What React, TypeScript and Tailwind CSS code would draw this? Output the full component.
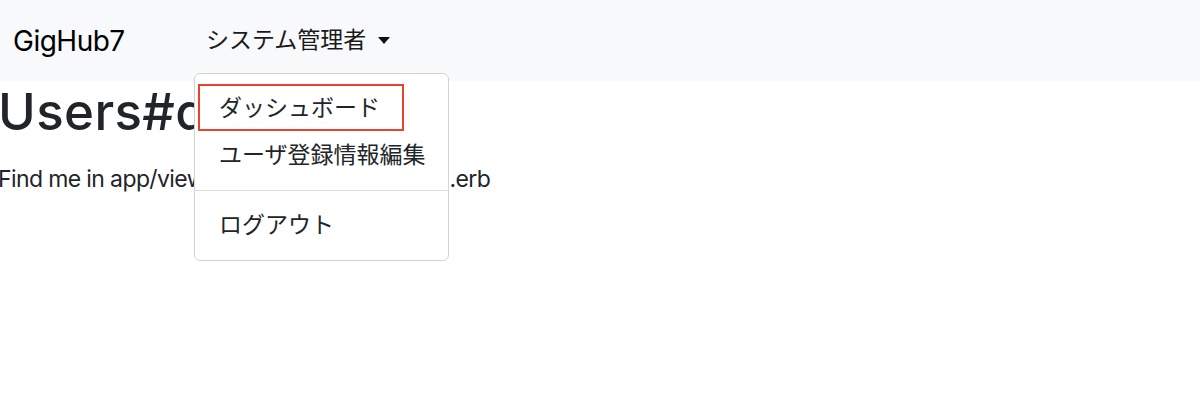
import React from "react";

const font = {
  fontFamily: '"Inter", "Noto Sans CJK JP", sans-serif',
};

export default function App() {
  return (
    <div className="w-[1200px] h-[412px] bg-white overflow-hidden text-[#212529]" style={font}>
      <nav className="h-[81px] bg-[#f8f9fa] flex items-center">
        <a className="pl-[13px] w-[194px] text-[28px] leading-none text-black tracking-[-0.5px]">GigHub7</a>
        <div className="relative self-stretch flex items-center">
          <button className="flex items-center px-[12px] text-[23px] leading-[1.5] text-[#1a1a1a]">
            システム管理者
            <span className="ml-[12px] inline-block w-0 h-0 border-l-[6px] border-r-[6px] border-t-[7px] border-l-transparent border-r-transparent border-t-[#111]" />
          </button>
          <div className="absolute left-0 top-[73px] z-10 w-[255px] h-[188px] bg-white border border-[#d3d3d3] rounded-[6px] pt-[11px] pb-[11px]">
            <div className="absolute left-[3px] top-[10px] w-[206px] h-[47px] border-2 border-[#e8432e]" />
            <div className="h-[47px] flex items-center pl-[24px] text-[23px] text-[#212529]">ダッシュボード</div>
            <div className="h-[47px] flex items-center pl-[24px] text-[23px] text-[#212529]">ユーザ登録情報編集</div>
            <div className="my-[11px] border-t border-[#dcdcdc]" />
            <div className="h-[47px] flex items-center pl-[24px] text-[23px] text-[#212529]">ログアウト</div>
          </div>
        </div>
      </nav>
      <main className="-ml-[2px]">
        <h1 className="text-[51px] font-medium leading-[1.2] mb-[20px] tracking-[0.4px]">Users#dashboard</h1>
        <p className="text-[23px] leading-[1.5] tracking-[-0.62px]">Find me in app/views/users/dashboard.html.erb</p>
      </main>
    </div>
  );
}
